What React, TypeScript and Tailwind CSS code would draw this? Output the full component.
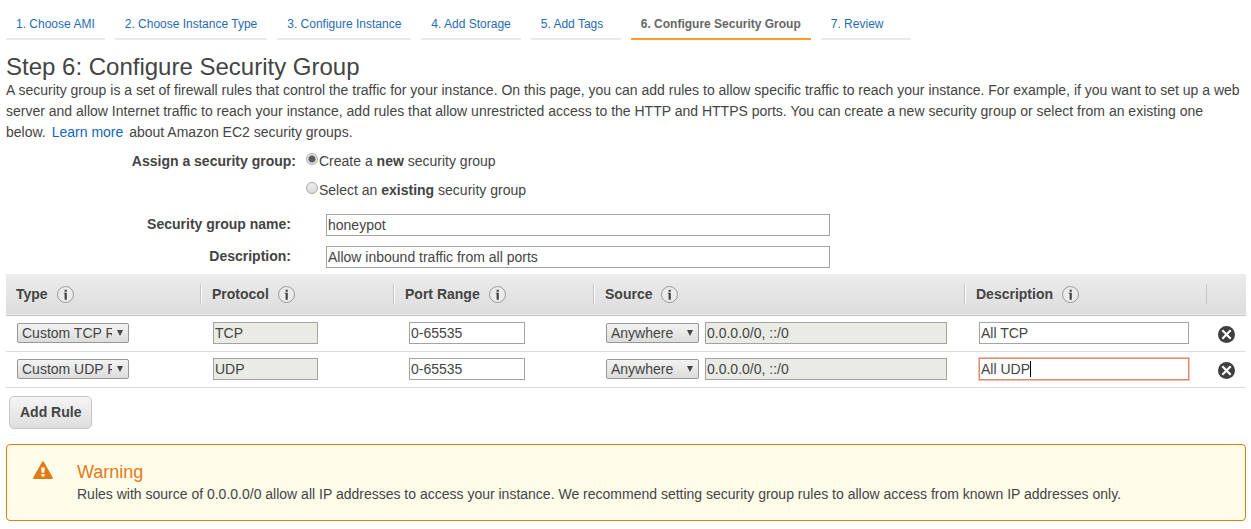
import { ReactElement, ReactNode, useState } from "react";
import clsx from "clsx";

const steps = [
  "1. Choose AMI",
  "2. Choose Instance Type",
  "3. Configure Instance",
  "4. Add Storage",
  "5. Add Tags",
  "6. Configure Security Group",
  "7. Review",
];

const columns = [
  { title: "Type", width: "w-[194px]" },
  { title: "Protocol", width: "w-[193px]" },
  { title: "Port Range", width: "w-[200px]" },
  { title: "Source", width: "" },
  { title: "Description", width: "w-[242px]" },
];

const rules = [
  { type: "Custom TCP Rule", protocol: "TCP", ports: "0-65535", description: "All TCP" },
  { type: "Custom UDP Rule", protocol: "UDP", ports: "0-65535", description: "All UDP", active: true },
];

const field =
  "h-[22px] border border-[#a3a3a3] bg-white px-px text-sm text-[#444] outline-none disabled:bg-[#e9ebe4]";

function InfoIcon(): ReactElement {
  return (
    <svg className="h-[17px] w-[17px]" viewBox="0 0 17 17" aria-hidden="true">
      <circle cx="8.5" cy="8.5" r="8" fill="#ebebeb" stroke="#999" />
      <path d="M7.6 3.8h2.2v2H7.6zM6.8 6.8h3v6.9H7.6V7.8h-.8z" fill="#444" />
    </svg>
  );
}

function DeleteIcon(): ReactElement {
  return (
    <svg className="h-[17px] w-[17px]" viewBox="0 0 17 17" aria-hidden="true">
      <circle cx="8.5" cy="8.5" r="8.5" fill="#3f3f3f" />
      <path d="M4.3 4.3l8.4 8.4M12.7 4.3l-8.4 8.4" stroke="#fff" strokeWidth="2.2" />
    </svg>
  );
}

function WarningIcon(): ReactElement {
  return (
    <svg className="h-5 w-5" viewBox="0 0 20 20" aria-hidden="true">
      <path d="M10 1.2L19 17H1z" fill="#e07b16" stroke="#e07b16" strokeWidth="1.8" strokeLinejoin="round" />
      <path d="M8.2 6.4h3.6l-.4 5.4H8.6zM8.4 13h3.2v2.6H8.4z" fill="#fffcea" />
    </svg>
  );
}

function Select({ label, value, className }: { label: string; value: string; className: string }): ReactElement {
  return (
    <div className={clsx("relative shrink-0", className)}>
      <select
        aria-label={label}
        className="block h-5 w-full appearance-none rounded-[2px] border border-[#979797] bg-linear-to-b from-[#f3f3f3] to-[#dcdcdc] pr-4 pl-1 text-sm leading-[18px] text-[#444]"
      >
        <option>{value}</option>
      </select>
      <svg className="pointer-events-none absolute top-[7px] right-[6px] h-[6px] w-[6px]" viewBox="0 0 6 6">
        <path d="M0 0h6L3 6z" fill="#444" />
      </svg>
    </div>
  );
}

function Choice({
  checked,
  onChange,
  children,
}: {
  checked: boolean;
  onChange: () => void;
  children: ReactNode;
}): ReactElement {
  return (
    <label className="flex items-start">
      <input
        type="radio"
        name="assign"
        checked={checked}
        onChange={onChange}
        className="mt-0.5 mr-px h-3 w-3 appearance-none rounded-full border border-[#a8a8a8] bg-linear-to-b from-[#ececec] to-[#dcdcdc] checked:bg-[radial-gradient(circle,#5a5a5a_0_2px,#5a5a5a_3px,#e6e6e6_4px)]"
      />
      <span>{children}</span>
    </label>
  );
}

export default function App(): ReactElement {
  const [group, setGroup] = useState("new");

  return (
    <main className="pt-4 pr-[5px] pb-2 pl-[6px] font-['Liberation_Sans',Arial,sans-serif] text-sm leading-[21px] text-[#444]">
      <nav className="flex flex-wrap gap-[10px] text-xs">
        {steps.map((step, i) => (
          <a
            key={step}
            href="#"
            className={clsx(
              "min-w-[90px] border-b-2 px-[10px] pb-[6px]",
              i === 5 ? "border-[#ff9c2a] font-bold text-[#666]" : "border-[#eaeaea] text-[#1f6cb5]"
            )}
          >
            {step}
          </a>
        ))}
      </nav>

      <h1 className="mt-[13px] text-2xl leading-[27px]">Step 6: Configure Security Group</h1>
      <p>
        A security group is a set of firewall rules that control the traffic for your instance. On this page, you can
        add rules to allow specific traffic to reach your instance. For example, if you want to set up a web server and
        allow Internet traffic to reach your instance, add rules that allow unrestricted access to the HTTP and HTTPS
        ports. You can create a new security group or select from an existing one below.
        <a href="#" className="mr-[2px] ml-[6px] text-[#1166bb]">
          Learn more
        </a>{" "}
        about Amazon EC2 security groups.
      </p>

      <div className="mt-2 flex gap-[10px]" role="radiogroup" aria-labelledby="assign-label">
        <span id="assign-label" className="w-[290px] text-right font-bold">
          Assign a security group:
        </span>
        <div className="flex flex-col gap-2">
          <Choice checked={group === "new"} onChange={() => setGroup("new")}>
            Create a <b>new</b> security group
          </Choice>
          <Choice checked={group === "existing"} onChange={() => setGroup("existing")}>
            Select an <b>existing</b> security group
          </Choice>
        </div>
      </div>

      <div className="mt-[13px] flex flex-col gap-[10px]">
        <div className="flex gap-[35px]">
          <label htmlFor="group-name" className="w-[285px] text-right font-bold">
            Security group name:
          </label>
          <input id="group-name" defaultValue="honeypot" className={clsx(field, "w-[504px]")} />
        </div>
        <div className="flex gap-[35px]">
          <label htmlFor="group-description" className="w-[285px] text-right font-bold">
            Description:
          </label>
          <input
            id="group-description"
            defaultValue="Allow inbound traffic from all ports"
            className={clsx(field, "w-[504px]")}
          />
        </div>
      </div>

      <table className="mt-[6px] w-full table-fixed border-collapse">
        <thead>
          <tr className="h-[41px] border-b border-[#c4c4c4] bg-linear-to-b from-[#ececec] to-[#dddddd]">
            {columns.map((column, i) => (
              <th key={column.title} className={clsx("p-0 text-left", column.width)}>
                <div
                  className={clsx(
                    "flex h-5 items-center gap-[9px]",
                    i === 0 ? "pl-[10px]" : "border-l border-[#c4c4c4] pl-[11px] shadow-[inset_1px_0_0_#fff]"
                  )}
                >
                  {column.title}
                  <InfoIcon />
                </div>
              </th>
            ))}
            <th className="w-10 p-0">
              <div className="h-5 border-l border-[#c4c4c4]" />
            </th>
          </tr>
        </thead>
        <tbody>
          {rules.map((rule) => (
            <tr key={rule.protocol} className="h-9 border-b border-[#dddddd]">
              <td className="p-0 pl-[11px]">
                <Select label="Type" value={rule.type} className="w-[112px]" />
              </td>
              <td className="p-0 pl-[13px]">
                <input aria-label="Protocol" disabled defaultValue={rule.protocol} className={clsx(field, "block w-[105px]")} />
              </td>
              <td className="p-0 pl-4">
                <input aria-label="Port range" defaultValue={rule.ports} className={clsx(field, "block w-[116px]")} />
              </td>
              <td className="p-0 pr-[17px] pl-[13px]">
                <div className="flex items-center gap-[6px]">
                  <Select label="Source" value="Anywhere" className="w-[93px]" />
                  <input
                    aria-label="Source addresses"
                    disabled
                    defaultValue="0.0.0.0/0, ::/0"
                    className={clsx(field, "min-w-0 flex-1")}
                  />
                </div>
              </td>
              <td className="p-0 pl-[15px]">
                <div className="relative w-[210px]">
                  <input
                    aria-label="Description"
                    defaultValue={rule.description}
                    className={clsx(
                      field,
                      "block w-full",
                      rule.active && "border-[#d98c73] shadow-[0_0_0_1px_#f5bfae]"
                    )}
                  />
                  {rule.active && <span className="absolute top-[3px] left-[51px] h-4 w-px bg-black" />}
                </div>
              </td>
              <td className="p-0">
                <button aria-label="Delete rule" className="mx-auto mt-[2px] block">
                  <DeleteIcon />
                </button>
              </td>
            </tr>
          ))}
        </tbody>
      </table>

      <button className="mt-2 ml-[3px] block h-[33px] rounded-[5px] border border-[#c6c6c6] bg-linear-to-b from-[#f5f5f5] to-[#dedede] px-[10px] font-bold">
        Add Rule
      </button>

      <section className="mt-[15px] flex gap-6 rounded-[4px] border border-[#e07b16] bg-[#fffcea] px-[26px] pt-4 pb-[15px]">
        <WarningIcon />
        <div>
          <h2 className="text-lg leading-[23px] text-[#e07b16]">Warning</h2>
          <p>
            Rules with source of 0.0.0.0/0 allow all IP addresses to access your instance. We recommend setting security
            group rules to allow access from known IP addresses only.
          </p>
        </div>
      </section>
    </main>
  );
}
